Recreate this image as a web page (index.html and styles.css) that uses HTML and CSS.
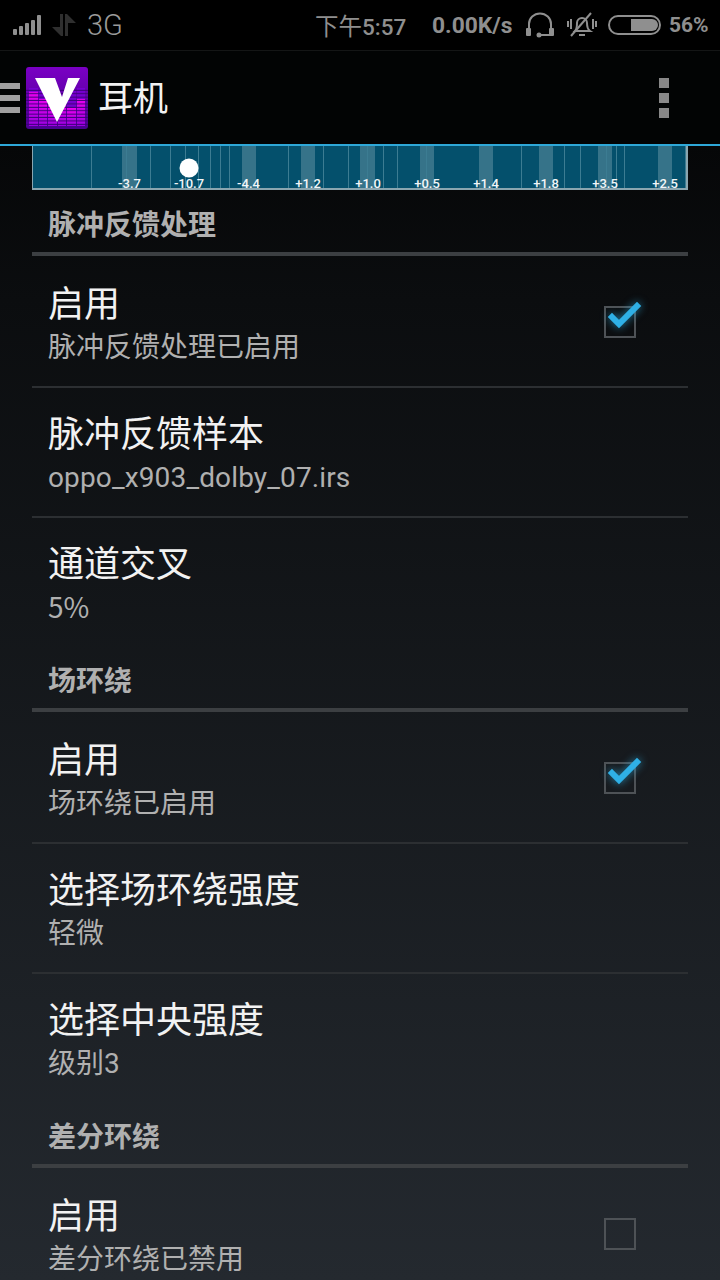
FILE: index.html
```html
<!DOCTYPE html>
<html lang="zh">
<head>
<meta charset="utf-8">
<title>耳机</title>
<link rel="stylesheet" href="styles.css">
</head>
<body>
<div class="status">
  <svg class="sig" width="30" height="24" viewBox="0 0 30 24"><g fill="#8f8f8f"><rect x="0" y="16" width="4" height="6" rx="1"/><rect x="6" y="13" width="4" height="9" rx="1"/><rect x="12" y="10" width="4" height="12" rx="1"/><rect x="18" y="7" width="4" height="15" rx="1"/><rect x="24" y="2" width="4" height="20" rx="1"/></g></svg>
  <svg class="data" width="24" height="24" viewBox="0 0 24 24"><g fill="#2f2f2f"><path d="M8 1h3v22h-2L0 14h8z"/><path d="M13 1h2l9 9h-8v13h-3z"/></g></svg>
  <span class="net">3G</span>
  <span class="time"><span class="cn">下午</span>5:57</span>
  <span class="speed">0.00K/s</span>
  <svg class="head" width="28" height="26" viewBox="0 0 28 26"><path d="M3 18V12a11 10.500 0 0 1 22 0v6" fill="none" stroke="#8f8f8f" stroke-width="2"/><rect x="0" y="16" width="5" height="8" rx="1" fill="#8f8f8f"/><rect x="23" y="16" width="5" height="8" rx="1" fill="#8f8f8f"/><path d="M13 23h13" stroke="#8f8f8f" stroke-width="2"/><circle cx="13" cy="23" r="2.500" fill="#8f8f8f"/></svg>
  <svg class="mute" width="30" height="28" viewBox="0 0 30 28"><g fill="none" stroke="#8f8f8f" stroke-width="2"><path d="M8 20c2-2 2-5 2-8a5 5 0 0 1 10 0c0 3 0 6 3 8z"/><path d="M4 25L24 2"/><path d="M1 10v6M4 8v10M26 8v10M29 10v6"/><path d="M12 24h6"/></g></svg>
  <svg class="batt" width="53" height="20" viewBox="0 0 53 20"><rect x="1" y="1" width="51" height="18" rx="9" fill="none" stroke="#8f8f8f" stroke-width="2"/><path d="M23 4h21a6 6 0 0 1 0 12H23z" fill="#8f8f8f"/></svg>
  <span class="pct">56%</span>
</div>
<header class="bar">
  <div class="burger"><i></i><i></i><i></i></div>
  <svg class="logo" width="62" height="62" viewBox="0 0 62 62">
    <defs>
      <linearGradient id="bg" x1="0" y1="0" x2="0" y2="1"><stop offset="0" stop-color="#7a00c4"/><stop offset="1" stop-color="#4a0090"/></linearGradient>
      <linearGradient id="pk" x1="0" y1="0" x2="0" y2="1"><stop offset="0" stop-color="#f000f0"/><stop offset="1" stop-color="#9a00e0"/></linearGradient>
      <pattern id="rows" width="62" height="3.400" patternUnits="userSpaceOnUse"><rect y="2.400" width="62" height="1" fill="#3c0078"/></pattern>
    </defs>
    <rect width="62" height="62" rx="3" fill="url(#bg)"/>
    <g fill="url(#pk)"><rect x="3" y="24" width="9" height="35"/><rect x="13" y="32" width="8" height="27"/><rect x="22" y="38" width="9" height="21"/><rect x="32" y="34" width="8" height="25"/><rect x="41" y="41" width="9" height="18"/><rect x="51" y="32" width="8" height="27"/></g>
    <g fill="#7a00d8" opacity=".8"><rect x="3" y="21" width="9" height="4"/><rect x="13" y="24" width="8" height="8"/><rect x="41" y="24" width="9" height="17"/><rect x="51" y="21" width="8" height="11"/></g>
    <rect y="21" width="62" height="38" fill="url(#rows)"/>
    <path d="M9 11h20l7 19 6-19h12L31 55z" fill="#fff"/>
  </svg>
  <h1 class="title">耳机</h1>
  <div class="dots"><i></i><i></i><i></i></div>
</header>
<div class="rule"></div>
<main class="content">
  <svg class="eq" width="656" height="44" viewBox="0 0 656 44">
    <rect width="656" height="44" fill="#04506c"/>
    <g fill="#fff" opacity=".2"><rect x="90" width="15" height="42"/><rect x="210" width="14" height="42"/><rect x="269" width="14" height="42"/><rect x="328" width="15" height="42"/><rect x="388" width="14" height="42"/><rect x="447" width="14" height="42"/><rect x="507" width="14" height="42"/><rect x="566" width="14" height="42"/><rect x="626" width="14" height="42"/></g>
    <g stroke="#3c7c92" stroke-width="1"><path d="M59.500 0v42M94.500 0v42M118.500 0v42M138.500 0v42M153.500 0v42M166.500 0v42M178.500 0v42M188.500 0v42M197.500 0v42M256.500 0v42M291.500 0v42M316.500 0v42M335.500 0v42M351.500 0v42M365.500 0v42M394.500 0v42M489.500 0v42M532.500 0v42M548.500 0v42M574.500 0v42M584.500 0v42M592.500 0v42M653.500 0v42"/></g>
    <path d="M.500 0v43H655V0" fill="none" stroke="#8aa6b0" stroke-width="1"/>
    <path d="M0 43h656M655 0v44" fill="none" stroke="#8aa6b0" stroke-width="2"/>
    <circle cx="157" cy="22" r="9.500" fill="#fff"/>
    <g class="eqtxt" text-anchor="middle" fill="#f2f6f8"><text x="97.500" y="42">-3.7</text><text x="157" y="42">-10.7</text><text x="216.500" y="42">-4.4</text><text x="276" y="42">+1.2</text><text x="336" y="42">+1.0</text><text x="395" y="42">+0.5</text><text x="454" y="42">+1.4</text><text x="514" y="42">+1.8</text><text x="573" y="42">+3.5</text><text x="633" y="42">+2.5</text></g>
  </svg>

  <h2 class="sec">脉冲反馈处理</h2>
  <div class="row"><div class="txt"><div class="t">启用</div><div class="s">脉冲反馈处理已启用</div></div><span class="box"><svg class="tick" width="38" height="30" viewBox="0 0 38 30"><path d="M8 17l7 7L33 6" fill="none" stroke="#2fb0e6" stroke-width="6" stroke-linecap="square"/></svg></span></div>
  <div class="row"><div class="txt"><div class="t">脉冲反馈样本</div><div class="s file">oppo_x903_dolby_07.irs</div></div></div>
  <div class="row last"><div class="txt"><div class="t">通道交叉</div><div class="s wide">5%</div></div></div>

  <h2 class="sec">场环绕</h2>
  <div class="row"><div class="txt"><div class="t">启用</div><div class="s">场环绕已启用</div></div><span class="box"><svg class="tick" width="38" height="30" viewBox="0 0 38 30"><path d="M8 17l7 7L33 6" fill="none" stroke="#2fb0e6" stroke-width="6" stroke-linecap="square"/></svg></span></div>
  <div class="row"><div class="txt"><div class="t">选择场环绕强度</div><div class="s">轻微</div></div></div>
  <div class="row last"><div class="txt"><div class="t">选择中央强度</div><div class="s">级别3</div></div></div>

  <h2 class="sec">差分环绕</h2>
  <div class="row"><div class="txt"><div class="t">启用</div><div class="s">差分环绕已禁用</div></div><span class="box"></span></div>
</main>
</body>
</html>
```
FILE: styles.css
```css
* { box-sizing: border-box; }
html, body { margin: 0; padding: 0; }
body {
  width: 720px;
  height: 1280px;
  overflow: hidden;
  background: linear-gradient(180deg, #060708 146px, #0b0d0f 300px, #24292f 1280px);
  font-family: Roboto, "Noto Sans CJK SC", sans-serif;
  color: #fff;
}
.status {
  height: 51px;
  background: #000;
  border-bottom: 1px solid #141616;
  display: flex;
  align-items: center;
  color: #8f8f8f;
  padding-left: 13px;
}
.sig { flex: none; }
.data { flex: none; margin-left: 9px; }
.net { font-size: 29px; font-weight: 300; margin-left: 11px; width: 228px; color: #9a9a9a; }
.time { font-size: 22.500px; font-weight: 500; width: 117px; white-space: nowrap; }
.cn { font-size: 23.500px; font-weight: 400; }
.speed { font-size: 22.800px; font-weight: 700; width: 94px; white-space: nowrap; }
.head { flex: none; }
.mute { flex: none; margin-left: 13px; }
.batt { flex: none; margin-left: 11px; }
.pct { font-size: 21px; font-weight: 700; margin-left: 8px; }

.bar {
  height: 93px;
  background: #020404;
  display: flex;
  align-items: center;
}
.burger { width: 20px; display: flex; flex-direction: column; gap: 6px; flex: none; }
.burger i { display: block; height: 6px; background: #a0a0a0; }
.logo { flex: none; margin-left: 6px; }
.title { margin: 0 0 4px 10px; font-size: 35px; font-weight: 400; color: #f2f2f2; flex: 1; }
.dots { display: flex; flex-direction: column; gap: 5px; margin-right: 51px; }
.dots i { display: block; width: 10px; height: 10px; background: #888; }
.rule { height: 2px; background: #2ea8d8; }

.content { padding: 0 32px; }
.eq { display: block; }
.eqtxt { font-size: 13px; font-weight: 500; }
.sec {
  margin: 0 0 2px;
  height: 66px;
  border-bottom: 4px solid #3c3f42;
  padding: 16px 0 0 16px;
  font-size: 28px;
  line-height: 40px;
  font-weight: 700;
  color: #b0b0b0;
}
.row {
  height: 130px;
  border-bottom: 2px solid #2c2f32;
  display: flex;
  align-items: center;
  justify-content: space-between;
  padding: 4px 52px 0 16px;
}
.row.last { border-bottom: 0; height: 128px; }
.txt { display: flex; flex-direction: column; }
.t { font-size: 36px; line-height: 48px; color: #f2f2f2; }
.s { font-size: 28px; line-height: 38px; color: #b0b0b0; }
.s.file { letter-spacing: .14px; }
.s.wide { font-family: "Noto Sans CJK SC", sans-serif; margin: -2px 0 2px; }
.box {
  flex: none;
  position: relative;
  width: 32px;
  height: 32px;
  margin-bottom: 4px;
  border: 2px solid #4e5256;
}
.tick {
  position: absolute;
  left: -2px;
  top: -8px;
  filter: drop-shadow(0 0 4px rgba(47,176,230,.7));
}
```
